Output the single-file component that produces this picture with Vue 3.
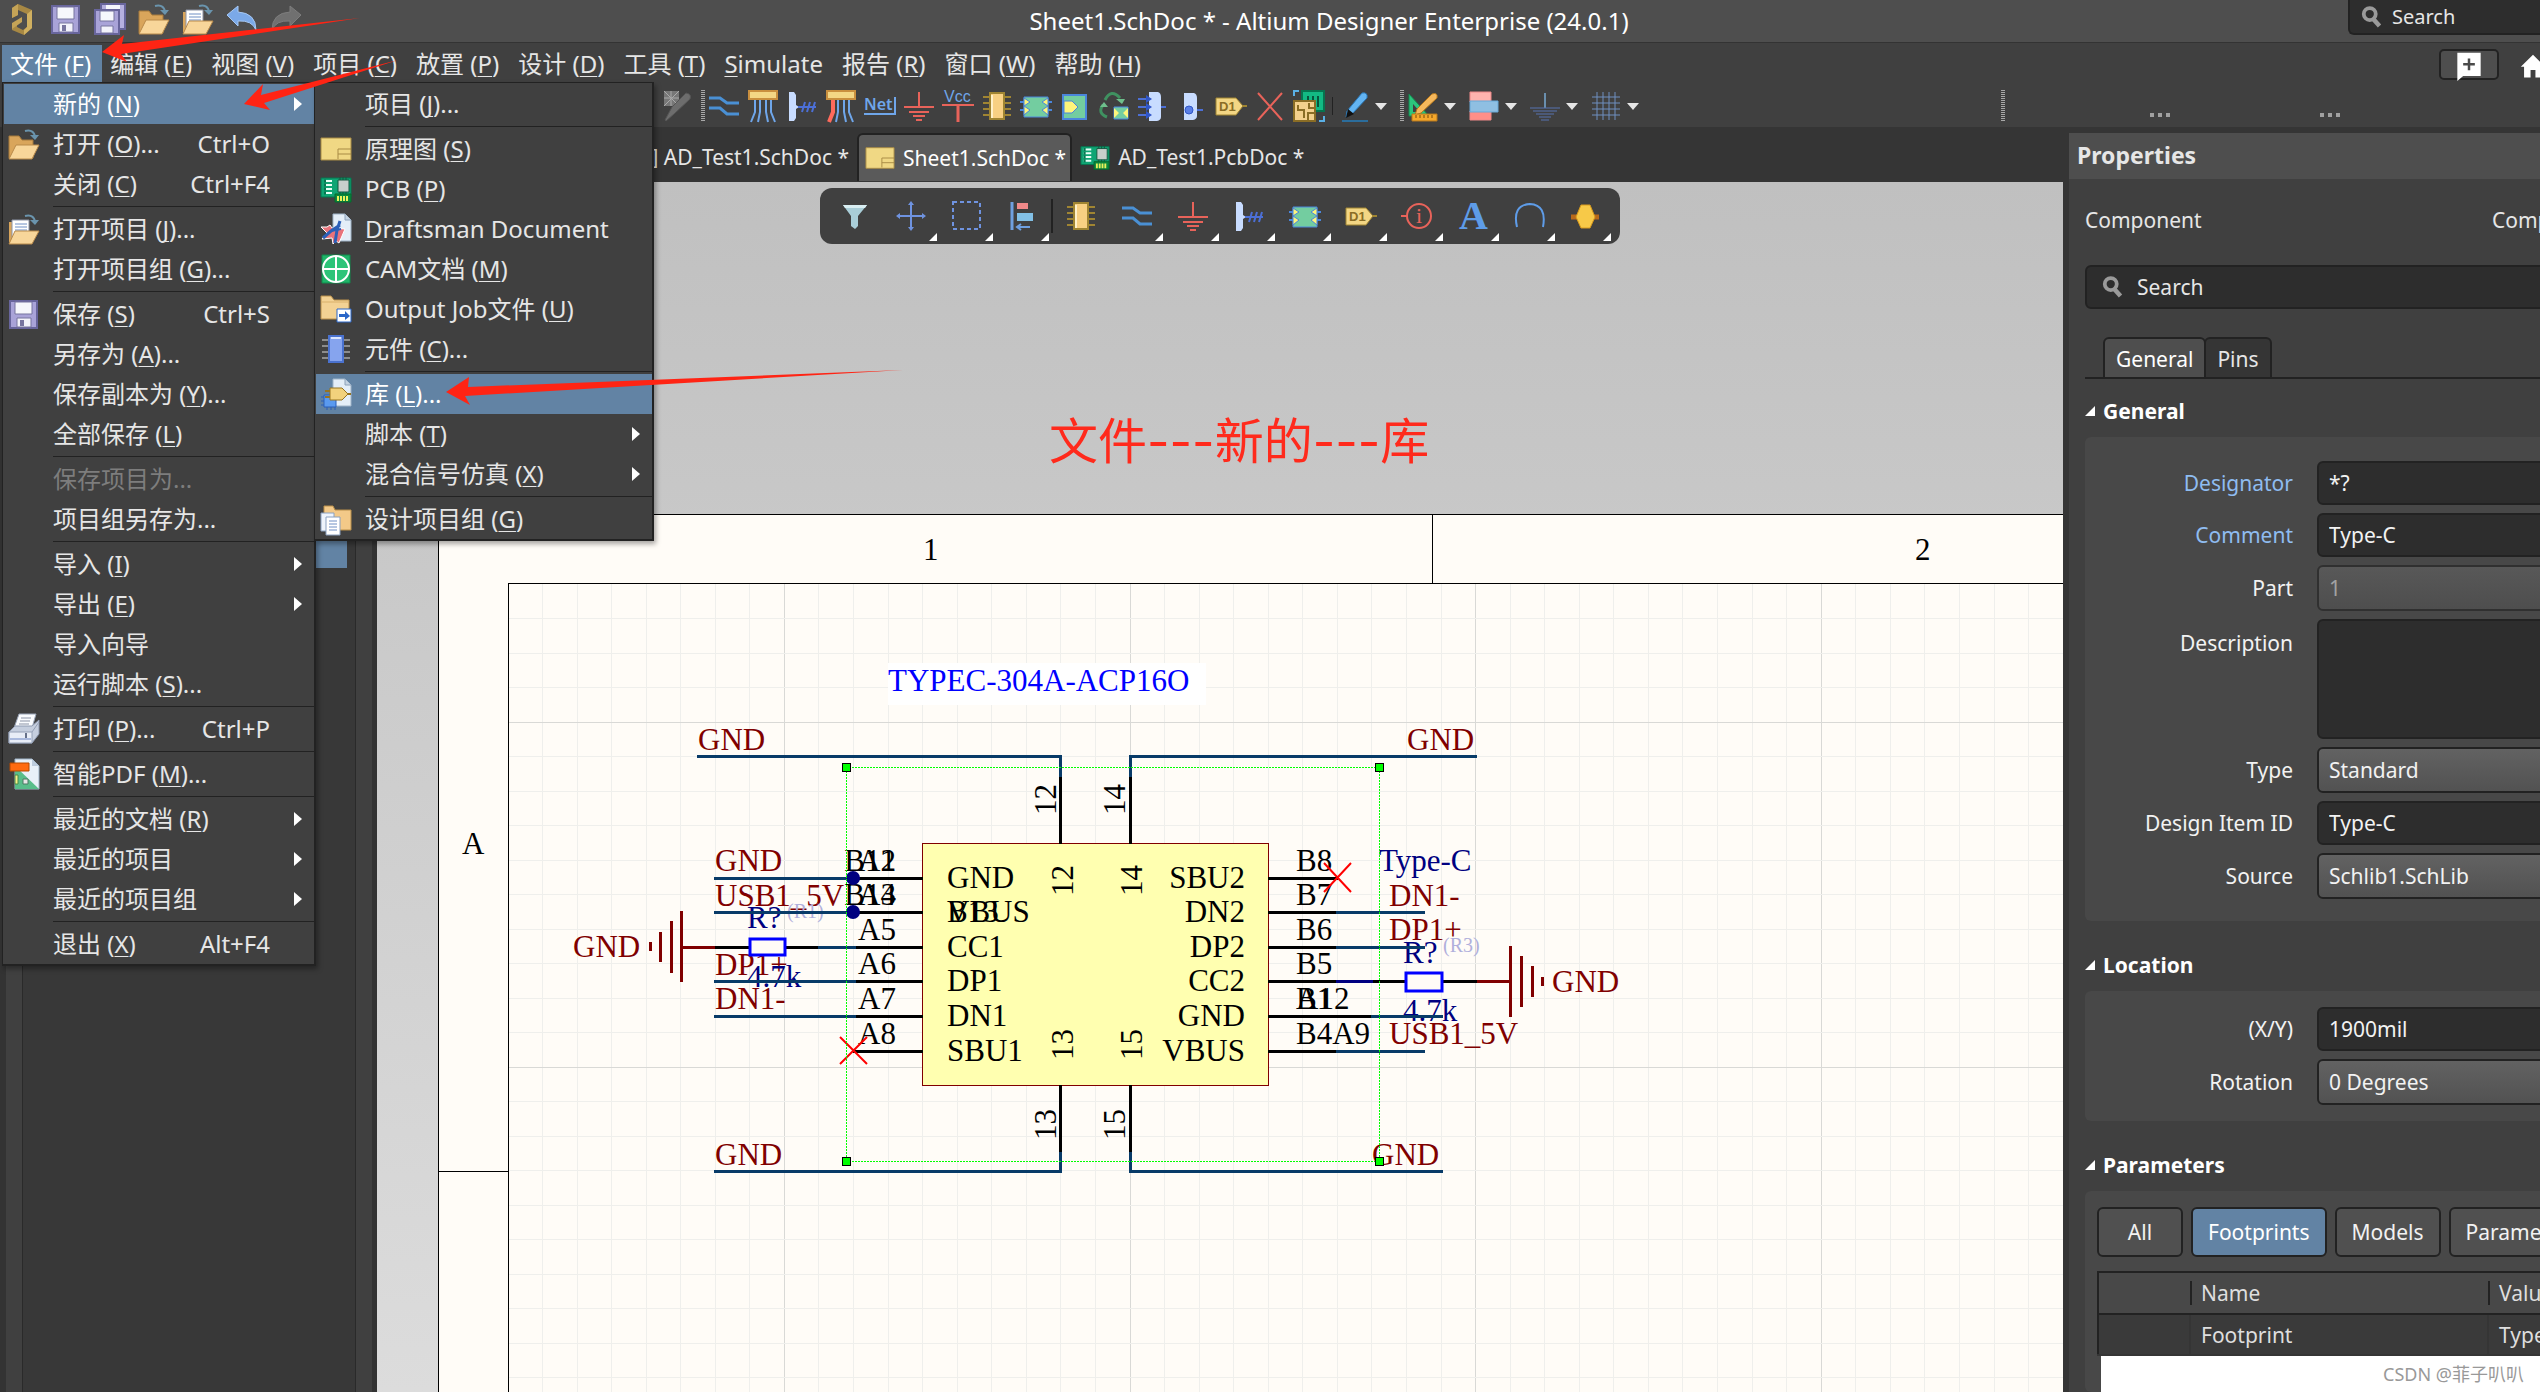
<script setup>
const quickIcons = ['logo', 'save', 'saveAll', 'folder', 'folderDocs', 'undo', 'redo']

const menuBar = [
  ['文件 (', 'F', ')'], ['编辑 (', 'E', ')'], ['视图 (', 'V', ')'], ['项目 (', 'C', ')'],
  ['放置 (', 'P', ')'], ['设计 (', 'D', ')'], ['工具 (', 'T', ')'], ['', 'S', 'imulate'],
  ['报告 (', 'R', ')'], ['窗口 (', 'W', ')'], ['帮助 (', 'H', ')']
]

const fileMenu = [
  [{ t: ['新的 (', 'N', ')'], sub: true, on: true }, { t: ['打开 (', 'O', ')...'], key: 'Ctrl+O', icon: 'folder' }, { t: ['关闭 (', 'C', ')'], key: 'Ctrl+F4' }],
  [{ t: ['打开项目 (', 'J', ')...'], icon: 'folderDocs' }, { t: ['打开项目组 (', 'G', ')...'] }],
  [{ t: ['保存 (', 'S', ')'], key: 'Ctrl+S', icon: 'save' }, { t: ['另存为 (', 'A', ')...'] }, { t: ['保存副本为 (', 'Y', ')...'] }, { t: ['全部保存 (', 'L', ')'] }],
  [{ t: ['保存项目为...', '', ''], off: true }, { t: ['项目组另存为...', '', ''] }],
  [{ t: ['导入 (', 'I', ')'], sub: true }, { t: ['导出 (', 'E', ')'], sub: true }, { t: ['导入向导', '', ''] }, { t: ['运行脚本 (', 'S', ')...'] }],
  [{ t: ['打印 (', 'P', ')...'], key: 'Ctrl+P', icon: 'printer' }],
  [{ t: ['智能PDF (', 'M', ')...'], icon: 'pdf' }],
  [{ t: ['最近的文档 (', 'R', ')'], sub: true }, { t: ['最近的项目', '', ''], sub: true }, { t: ['最近的项目组', '', ''], sub: true }],
  [{ t: ['退出 (', 'X', ')'], key: 'Alt+F4' }]
]

const newMenu = [
  [{ t: ['项目 (', 'J', ')...'] }],
  [{ t: ['原理图 (', 'S', ')'], icon: 'sheet' }, { t: ['PCB (', 'P', ')'], icon: 'pcb' }, { t: ['', 'D', 'raftsman Document'], icon: 'drafts' }, { t: ['CAM文档 (', 'M', ')'], icon: 'cam' }, { t: ['Output Job文件 (', 'U', ')'], icon: 'outjob' }, { t: ['元件 (', 'C', ')...'], icon: 'part' }],
  [{ t: ['库 (', 'L', ')...'], icon: 'library', on: true }, { t: ['脚本 (', 'T', ')'], sub: true }, { t: ['混合信号仿真 (', 'X', ')'], sub: true }],
  [{ t: ['设计项目组 (', 'G', ')'], icon: 'group' }]
]

const placeIcons = ['wires', 'bus', 'harness', 'signal', 'net', 'gnd', 'vcc', 'chip', 'block', 'entry', 'recycle', 'harnessIn', 'harnessDot', 'port', 'noErc', 'compile']
const dropIcons = ['rulers', 'alignBlock', 'gndBlue', 'gridIcon']
const floatIcons = [
  { n: 'filter' }, { n: 'move', d: 1 }, { n: 'marquee', d: 1 }, { n: 'align', d: 1 },
  { n: 'chip', sep: 1 }, { n: 'wires', d: 1 }, { n: 'gnd', d: 1 }, { n: 'harness', d: 1 }, { n: 'block', d: 1 },
  { n: 'port', d: 1 }, { n: 'info', d: 1 }, { n: 'letter', d: 1 }, { n: 'arc', d: 1 }, { n: 'hex', d: 1 }
]

const folderShape = '<path d="M1 8h10l3 4h11v18H1z" fill="#d9a55b" stroke="#a67a3c"/><path d="M8 17h23l-7 14H1z" fill="#f8d69a" stroke="#b98a4a"/>'
const folderArrow = '<path d="M17 3q8-2 10 5" fill="none" stroke="#6a94ad" stroke-width="2"/><path d="M22 7h9l-4 5z" fill="#6a94ad"/>'
const sheetDoc = '<path d="M13 1h12l6 6v21H13z" fill="#e4eef8" stroke="#9fb4c8"/><path d="M25 1v6h6" fill="#c3d2e2" stroke="#8ca2ba"/>'
const icons = {
  logo: '<path d="M6 5l6-4 14 6v18l-8 7-12-5v-4l5-3v4l6 3 4-3V11l-9-4v5l-6 3z" fill="#a78844"/><path d="M6 5l6-4v11l-6 3z" fill="#c4a357"/><path d="M6 20l10-6v5L6 26z" fill="#c4a357"/><path d="M21 11l5-4v18l-8 7v-5l3-3z" fill="#d0b060"/>',
  save: '<path d="M2 3h27v27H2z" fill="#a9a3d8" stroke="#68659c" stroke-width="2"/><path d="M7 4h17v12H7z" fill="#f6f7fc" stroke="#77749f"/><path d="M9 20h14v9H9z" fill="#f2f2fa" stroke="#77749f"/><path d="M12 22h4v6h-4z" fill="#77749f"/>',
  saveAll: '<path d="M7 1h24v25H7z" fill="#b5b0df" stroke="#68659c" stroke-width="2"/><path d="M12 2h14v6H12z" fill="#f6f7fc"/><path d="M1 7h24v24H1z" fill="#a9a3d8" stroke="#68659c" stroke-width="2"/><path d="M6 8h14v10H6z" fill="#f6f7fc" stroke="#77749f"/><path d="M7 23h12v7H7z" fill="#f2f2fa" stroke="#77749f"/>',
  folder: folderShape + folderArrow,
  folderDocs: '<path d="M1 9h6v20H1z" fill="#d9a55b"/><path d="M4 7h17v18H4z" fill="#fff" stroke="#8b93a5"/><path d="M7 11h12M7 14h12M7 17h12" stroke="#6f8fc4"/><path d="M7 18h24l-7 13H1z" fill="#f8d69a" stroke="#b98a4a"/>' + folderArrow,
  undo: '<path d="M1 12L12 3v6q18 1 18 18-4-10-18-9v5z" fill="#7ba9e8" stroke="#a6c8f4"/>',
  redo: '<path d="M31 12L20 3v6Q2 10 2 27q4-10 18-9v5z" fill="#707070" stroke="#7d7d7d"/>',
  printer: '<path d="M11 1h17l-4 14H6z" fill="#fafcff" stroke="#9aa5b8"/><path d="M13 5h10M12 8h10M11 11h10" stroke="#8b93a5"/><path d="M1 19l6-6h17l7-6v14l-7 9H1z" fill="#c5cede" stroke="#8e9ab0"/><path d="M1 19h23v11H1z" fill="#e8edf7" stroke="#94a0b6"/><path d="M24 19l7-10" stroke="#94a0b6"/><path d="M2 26h21" stroke="#6d86c4"/><path d="M18 20v5" stroke="#66718a" stroke-width="2"/>',
  pdf: '<path d="M7 1h17l7 7v23H7z" fill="#e8f0f8" stroke="#9fb4c8"/><path d="M7 8l24 23H7z" fill="#58bd8a"/><path d="M24 1v7h7" fill="#bccbdc"/><path d="M2 5h19v8H2z" fill="#ff6a10" stroke="#b54800"/><path d="M7 17h3v9H7z" fill="#f7f08a" stroke="#4b8a45"/><path d="M15 21h5v5h-5z" fill="#e6e6e6" stroke="#4b7a65"/>',
  sheet: '<path d="M1 5h30v22H1z" fill="#f0d884" stroke="#a88b45"/><path d="M18 26v-10h13M18 21h13" fill="none" stroke="#a88b45"/>',
  pcb: '<path d="M1 5h30v19H1z" fill="#0fa574" stroke="#07744f"/><path d="M4 8h8M4 12h8M4 16h8M4 20h8" stroke="#e6fff6" stroke-width="2"/><path d="M4 8h2M4 12h2M4 16h2M4 20h2" stroke="#07744f" stroke-width="3"/><path d="M18 7h11v12H18z" fill="#c8cfcb" stroke="#14563e"/><path d="M20 4v3M23 4v3M26 4v3M20 19v3M23 19v3M26 19v3" stroke="#14563e"/><path d="M15 21h16v8H15z" fill="#0a8a3f" stroke="#056a2d"/><path d="M18 23v5M21 23v5M24 23v5M27 23v5" stroke="#e9f25c" stroke-width="2"/>',
  drafts: sheetDoc + '<path d="M1 14h6l3-2 2 3 13 1-6 14-3-2-3 3-1-6-10 1 5-6z" fill="#e8737b" stroke="#fff"/><path d="M20 8l-3 9-2 13M3 25l8-7 9-6" fill="none" stroke="#2b5fb8" stroke-width="3"/><path d="M11 18l10-2" stroke="#2b5fb8" stroke-width="2"/>',
  cam: '<path d="M2 2h28v28H2z" fill="#1fb468" stroke="#118a4c"/><circle cx="16" cy="16" r="13" fill="#2cc478" stroke="#fff" stroke-width="2"/><path d="M16 3v26M3 16h26" stroke="#fff" stroke-width="2"/>',
  outjob: '<path d="M1 3h10l3 4h15v19H1z" fill="#f3d294" stroke="#b98f4a"/><path d="M2 9h26" stroke="#d9b06a"/><path d="M17 16h14v13H17z" fill="#fff" stroke="#2a66c8"/><path d="M19 21h6v-3l5 5-5 4v-3h-6z" fill="#2a66c8"/>',
  part: '<path d="M2 7h28M2 13h28M2 19h28M2 25h28" stroke="#8c8c8c" stroke-width="2"/><path d="M9 3h14v26H9z" fill="#86a4ee" stroke="#4a72cf" stroke-width="2"/><path d="M11 5h10" stroke="#dbe6ff" stroke-width="2"/>',
  library: sheetDoc + '<path d="M4 17h12v12H4z" fill="#5a9af0" stroke="#2a5fb8"/><path d="M1 19h3M1 23h3M1 27h3M7 29v3M11 29v3M15 29v3" stroke="#2a5fb8"/><path d="M10 10h12l6 6-6 6H10z" fill="#f2d27c" stroke="#977421"/><path d="M5 13h5M5 19h5M28 16h3" stroke="#977421" stroke-width="2"/>',
  group: '<path d="M4 3h9l2 4h16v20H4z" fill="#f3c988" stroke="#b98f4a"/><path d="M1 10h13v18H1z" fill="#eef4fc" stroke="#8aa0bf"/><path d="M6 14h14v18H6z" fill="#fff" stroke="#8aa0bf"/><path d="M9 18h8M9 21h8M9 24h8M9 27h8" stroke="#6f8fc4"/>',
  wand: '<path d="M3 1h15v15H3z" fill="#777"/><path d="M3 1l15 15M18 1L3 16M10 1v15M3 8h15" stroke="#a9a9a9"/><path d="M25 3q6 1 4 6L13 24l-8 7-1-1 7-13z" fill="#6d6d6d" stroke="#555"/>',
  wires: '<path d="M1 8h11l7 5h12M1 18h11l7 6h12" fill="none" stroke="#4a90d4" stroke-width="3"/>',
  bus: '<path d="M8 10v12l-4 10M13 10v12l-2 10M19 10v12l2 10M24 10v12l4 10" fill="none" stroke="#6fa6ea" stroke-width="2"/><path d="M2 1h28v8H2z" fill="#f3d684" stroke="#c98f3e" stroke-width="2"/>',
  harness: '<path d="M3 2h5l2 3v10l3 2-3 2v9l-2 3H3z" fill="#c8dcff"/><path d="M12 17h18M19 12l-3 10M24 12l-3 10M29 12l-3 10" stroke="#4c6fd6" stroke-width="2"/>',
  signal: '<path d="M13 10v12l-2 10M19 10v12l2 10M24 10v12l4 10" fill="none" stroke="#6fa6ea" stroke-width="2"/><path d="M8 10v12l-4 10" fill="none" stroke="#ff6a5c" stroke-width="4"/><path d="M2 1h28v8H2z" fill="#f3d684" stroke="#c98f3e" stroke-width="2"/>',
  net: '<text x="0" y="20" font-family="Noto Sans" font-weight="600" font-size="16" fill="#6fa6ea">Net</text><path d="M0 24h31V7" fill="none" stroke="#6fa6ea" stroke-width="2"/>',
  gnd: '<path d="M16 2v15" stroke="#e8635a" stroke-width="2"/><path d="M1 17h30M6 22h20M10 26h12M13 30h6" stroke="#e8635a" stroke-width="2"/>',
  vcc: '<text x="2" y="12" font-family="Liberation Sans" font-size="16" fill="#6fa6ea">Vcc</text><path d="M0 15h32" stroke="#e8635a" stroke-width="2"/><path d="M16 15v17" stroke="#e8635a" stroke-width="3"/>',
  chip: '<path d="M2 7h28M2 13h28M2 19h28M2 25h28" stroke="#a08532" stroke-width="2"/><path d="M9 3h14v26H9z" fill="#f8d082" stroke="#a08532" stroke-width="2"/><path d="M11 5v23" stroke="#fff0c8" stroke-width="2"/>',
  block: '<path d="M0 12h32M0 20h32" stroke="#4a86dc" stroke-width="2"/><path d="M4 7h24v20H4z" fill="#73cda0" stroke="#4a86dc"/><path d="M4 8l6 4-6 4 6 4-6 5zM28 8l-6 4 6 4-6 4 6 5z" fill="#fdf57c" stroke="#4a86dc"/>',
  entry: '<path d="M4 5h23v24H4z" fill="#73cda0" stroke="#4a86dc" stroke-width="2"/><path d="M5 11h8l6 6-6 6H5z" fill="#fdf57c" stroke="#4a86dc"/>',
  recycle: '<path d="M7 10q6-12 15-2M5 15q-6 8 4 12" fill="none" stroke="#3f9160" stroke-width="3"/><path d="M18 9h9l-3 5zM2 17l4-5 4 5z" fill="#6fbf8c"/><path d="M16 17h14v12H16z" fill="#73cda0" stroke="#4a86dc"/><path d="M16 18l5 5-5 5zM30 18l-5 5 5 5z" fill="#fdf57c"/>',
  harnessIn: '<path d="M12 2h9q3 1 3 5v20q0 3-4 4h-8z" fill="#c8dcff"/><path d="M1 9h10M1 17h10M1 25h10M24 17h5" stroke="#4c6fd6" stroke-width="2"/><path d="M9 5l6 4-6 4zM9 13l6 4-6 4zM9 21l6 4-6 4z" fill="#2f56c8"/>',
  harnessDot: '<path d="M8 3h10q3 1 3 5v18q0 3-4 4H8z" fill="#c8dcff"/><circle cx="13" cy="20" r="4" fill="#5a7fe6" stroke="#2f56c8"/><path d="M21 20h6" stroke="#4c6fd6" stroke-width="2"/>',
  port: '<path d="M1 8h20l7 8-7 9H1z" fill="#f3d684" stroke="#a08532"/><path d="M28 16h4" stroke="#a08532" stroke-width="2"/><text x="4" y="21" font-family="Liberation Sans" font-weight="700" font-size="13" fill="#8a6d25">D1</text>',
  noErc: '<path d="M4 3l24 27M28 3L4 30" stroke="#e8635a" stroke-width="2"/>',
  compile: '<path d="M9 1h22v20H9z" fill="#12b983" stroke="#07744f" stroke-width="2"/><path d="M15 6v6M20 6v6M25 6v11" stroke="#06563c" stroke-width="2"/><path d="M1 11h21v20H1z" fill="#f3d08c" stroke="#8a6d25" stroke-width="2"/><path d="M5 15v5h6v8M16 13v5h5M15 30v-7h6" fill="none" stroke="#8a6d25" stroke-width="2"/><path d="M1 6V1h5M31 26v5h-5" fill="none" stroke="#5ab0e6" stroke-width="2"/>',
  pen: '<path d="M24 3q6-1 5 5L14 24l-6 3 1-6z" fill="#63b4f2" stroke="#2a78b8"/><path d="M10 19l6 5-8 4z" fill="#111"/><path d="M4 31h26" stroke="#2b6d9c" stroke-width="2"/>',
  rulers: '<path d="M2 4l20 22H2z" fill="#2bc67c" stroke="#15874f"/><path d="M6 14l7 8H6z" fill="#404040"/><path d="M25 4q6-2 5 4L14 23l-6 2 2-6z" fill="#f5b85c" stroke="#b5771c"/><path d="M5 24h25v7H5z" fill="#f5a82c" stroke="#b5771c"/><path d="M9 25v3M13 25v3M17 25v3M21 25v3M25 25v3" stroke="#7a4d0a"/>',
  alignBlock: '<path d="M2 2h21v10H2z" fill="#ffb3ae" stroke="#e88"/><path d="M2 21h21v9H2z" fill="#ff8f88" stroke="#e88"/><path d="M2 11h28v11H2z" fill="#8fbfe2" stroke="#69a9d8"/>',
  gndBlue: '<path d="M16 3v15" stroke="#6a8fae" stroke-width="2"/><path d="M1 18h30M4 21h24M7 24h18M10 27h12M12 30h8" stroke="#5673b0" stroke-width="1"/>',
  gridIcon: '<path d="M7 2v28M13 2v28M19 2v28M25 2v28M2 7h28M2 13h28M2 19h28M2 25h28" stroke="#6f8fc0"/>',
  filter: '<path d="M4 5h24l-9 11v10l-3 3-4-3V16z" fill="#a9ced8"/><path d="M4 5h24l-2 3H6z" fill="#d9eef2"/>',
  move: '<path d="M16 3v26M3 16h26" stroke="#6f93e0" stroke-width="2"/><path d="M13 5l3-4 3 4zM13 27l3 4 3-4zM5 13l-4 3 4 3zM27 13l4 3-4 3z" fill="#6f93e0"/>',
  marquee: '<path d="M2 2h27v27H2z" fill="none" stroke="#6f93e0" stroke-width="2" stroke-dasharray="4 3"/>',
  align: '<path d="M5 2v28" stroke="#6fa0e0" stroke-width="3"/><path d="M10 3h11v6H10z" fill="#f08a8a"/><path d="M10 13h16v8H10z" fill="#82c0e6"/><path d="M10 27h13M14 24l-4 3 4 3" fill="none" stroke="#6fa0e0" stroke-width="2"/>',
  info: '<circle cx="18" cy="16" r="12" fill="none" stroke="#e8635a" stroke-width="2"/><path d="M0 16h6" stroke="#e8635a" stroke-width="2"/><text x="15" y="23" font-family="Liberation Serif" font-size="22" fill="#e8635a">i</text>',
  letter: '<text x="2" y="29" font-family="Liberation Serif" font-weight="700" font-size="40" fill="#5e9ce8">A</text>',
  arc: '<path d="M4 27Q-1 5 17 4q17 1 13 23" fill="none" stroke="#5e9ce8" stroke-width="2"/>',
  hex: '<path d="M2 17h28" stroke="#b8691a" stroke-width="5"/><path d="M12 5h9l5 12-5 11h-9L7 17z" fill="#f7c948" stroke="#d89a1c"/>',
  find: '<circle cx="13" cy="12" r="8" fill="none" stroke="#9a9a9a" stroke-width="5"/><path d="M18 19l8 9" stroke="#9a9a9a" stroke-width="6"/>',
  comment: '<path d="M3 2h28v28H10l-7 6z" fill="#fff"/><path d="M17 9v14M10 16h14" stroke="#4a4a4a" stroke-width="3"/>',
  home: '<path d="M16 2l15 15h-4v13h-8v-9h-6v9H5V17H1z" fill="#fff"/>'
}

/* schematic data, in sheet coordinates */
const gridX = Array.from({ length: 45 }, (_, i) => ({ p: Math.round(542 + i * 34.56), major: i % 10 === 7 }))
const gridY = Array.from({ length: 24 }, (_, i) => ({ p: Math.round(619 + i * 34.5) - 1, major: i % 10 === 3 }))
const rows = [878, 912, 947, 981, 1016, 1051]
const leftNames = ['GND', 'VBUS', 'CC1', 'DP1', 'DN1', 'SBU1']
const rightNames = ['SBU2', 'DN2', 'DP2', 'CC2', 'GND', 'VBUS']
const leftPins = [['B12', 'A1'], ['B13', 'A4'], ['A5'], ['A6'], ['A7'], ['A8']]
const rightPins = [['B8'], ['B7'], ['B6'], ['B5'], ['B1', 'A12'], ['B4A9']]
const wires = [
  'M697 756H1060V777', 'M1477 756H1130V777', 'M714 1171H1060V1152', 'M1443 1171H1130V1152',
  'M714 878H853', 'M714 912H853', 'M818 947H856', 'M714 981H856', 'M714 1016H856',
  'M1336 912H1425', 'M1336 947H1425', 'M1371 1016H1443', 'M1336 1051H1425'
]
const pins = [
  'M1060 777V844', 'M1130 777V844', 'M1060 1085V1152', 'M1130 1085V1152',
  'M853 878H923', 'M853 912H923', 'M856 947H923', 'M856 981H923', 'M856 1016H923', 'M853 1051H923',
  'M1268 878H1338', 'M1268 912H1336', 'M1268 947H1336', 'M1268 981H1336', 'M1268 1016H1371', 'M1268 1051H1336',
  'M715 947H750', 'M785 947H818', 'M1373 981H1406', 'M1442 981H1477'
]
const nets = [
  ['GND', 698, 750], ['GND', 1407, 750], ['GND', 715, 871], ['USB1_5V', 715, 906], ['DP1+', 715, 975],
  ['DN1-', 715, 1009], ['GND', 715, 1165], ['GND', 1372, 1165], ['DN1-', 1389, 906], ['DP1+', 1389, 940],
  ['USB1_5V', 1389, 1044], ['GND', 573, 957], ['GND', 1552, 992]
]
const vertical = [
  ['12', 1056, 815], ['14', 1125, 815], ['12', 1073, 896], ['14', 1142, 896],
  ['13', 1073, 1060], ['15', 1142, 1060], ['13', 1056, 1140], ['15', 1125, 1140]
]
const handles = [[846, 767], [1379, 767], [846, 1161], [1379, 1161]]
</script>

<template>
  <div class="app">
    <header class="titlebar">
      <div class="quick">
        <button v-for="n in quickIcons" :key="n" class="quick-btn" :aria-label="n">
          <svg viewBox="0 0 32 32" v-html="icons[n]"></svg>
        </button>
      </div>
      <h1>Sheet1.SchDoc * - Altium Designer Enterprise (24.0.1)</h1>
      <div class="global-search">
        <svg viewBox="0 0 32 32" v-html="icons.find"></svg>
        <input type="text" placeholder="Search" aria-label="Search">
      </div>
    </header>

    <nav class="menubar">
      <button v-for="(m, i) in menuBar" :key="i" class="menu-btn" :class="{ open: i === 0 }">{{ m[0] }}<u>{{ m[1] }}</u>{{ m[2] }}</button>
      <div class="menubar-right">
        <button class="comment-btn" aria-label="Comment"><svg viewBox="0 0 34 36" v-html="icons.comment"></svg></button>
        <button class="home-btn" aria-label="Home"><svg viewBox="0 0 32 32" v-html="icons.home"></svg></button>
      </div>

      <div class="menu file-menu">
        <div v-for="(g, gi) in fileMenu" :key="gi" class="group">
          <button v-for="(it, k) in g" :key="k" class="item" :class="{ on: it.on }" :disabled="it.off">
            <span class="ico"><svg v-if="it.icon" viewBox="0 0 32 32" v-html="icons[it.icon]"></svg></span>
            <span class="label">{{ it.t[0] }}<u v-if="it.t[1]">{{ it.t[1] }}</u>{{ it.t[2] }}</span>
            <span v-if="it.key" class="key">{{ it.key }}</span>
            <span v-if="it.sub" class="caret"></span>
          </button>
        </div>
        <div class="menu new-menu">
          <div v-for="(g, gi) in newMenu" :key="gi" class="group">
            <button v-for="(it, k) in g" :key="k" class="item" :class="{ on: it.on }">
              <span class="ico"><svg v-if="it.icon" viewBox="0 0 32 32" v-html="icons[it.icon]"></svg></span>
              <span class="label">{{ it.t[0] }}<u>{{ it.t[1] }}</u>{{ it.t[2] }}</span>
              <span v-if="it.sub" class="caret"></span>
            </button>
          </div>
        </div>
      </div>
    </nav>

    <div class="toolbar">
      <button class="tool" aria-label="wand"><svg viewBox="0 0 32 32" v-html="icons.wand"></svg></button>
      <span class="grip"></span>
      <button v-for="n in placeIcons" :key="n" class="tool" :aria-label="n"><svg viewBox="0 0 32 32" v-html="icons[n]"></svg></button>
      <span class="tool-sep"></span>
      <button class="tool drop" aria-label="pen"><svg viewBox="0 0 32 32" v-html="icons.pen"></svg></button>
      <span class="grip"></span>
      <button v-for="n in dropIcons" :key="n" class="tool drop" :aria-label="n"><svg viewBox="0 0 32 32" v-html="icons[n]"></svg></button>
      <div class="toolbar-end">
        <span class="grip"></span>
        <span class="dots"><i></i><i></i><i></i></span>
        <span class="dots"><i></i><i></i><i></i></span>
      </div>
    </div>

    <main class="work">
      <aside class="side">
        <div class="side-body"><div class="tree-row"></div></div>
      </aside>

      <section class="docs">
        <div class="tabs">
          <button class="tab first">[1] AD_Test1.SchDoc *</button>
          <button class="tab active"><svg viewBox="0 0 32 32" v-html="icons.sheet"></svg>Sheet1.SchDoc *</button>
          <button class="tab"><svg viewBox="0 0 32 32" v-html="icons.pcb"></svg>AD_Test1.PcbDoc *</button>
        </div>
        <div class="canvas">
          <svg class="schematic" viewBox="377 182 1686 1210" preserveAspectRatio="xMinYMin slice">
            <rect x="438" y="514" width="3000" height="2000" fill="#fffcf7" stroke="#000" stroke-width="1" shape-rendering="crispEdges" />
            <g shape-rendering="crispEdges" stroke-width="1">
              <path v-for="g in gridX" :key="'x' + g.p" :d="`M${g.p} 583V1500`" :stroke="g.major ? '#d9d9d6' : '#efefec'" />
              <path v-for="g in gridY" :key="'y' + g.p" :d="`M508 ${g.p}H2100`" :stroke="g.major ? '#d9d9d6' : '#efefec'" />
            </g>
            <path d="M2100 583H508V1400M1432 514V583M438 1171H508" fill="none" stroke="#000" stroke-width="1" shape-rendering="crispEdges" />
            <g class="sch" fill="#000">
              <text x="923" y="560">1</text>
              <text x="1915" y="560">2</text>
              <text x="462" y="854">A</text>
            </g>
            <rect x="888" y="663" width="318" height="42" fill="#fff" />
            <text class="sch" x="888" y="691" fill="#00f">TYPEC-304A-ACP16O</text>

            <rect x="922" y="843" width="346" height="242" fill="#ffffb0" stroke="#800000" shape-rendering="crispEdges" />
            <g class="sch" fill="#800000">
              <text v-for="(n, i) in nets" :key="i" :x="n[1]" :y="n[2]">{{ n[0] }}</text>
            </g>
            <g class="sch" fill="#000080">
              <text x="1379" y="871">Type-C</text>
              <text x="747" y="928">R?</text>
              <text x="747" y="987">4.7k</text>
              <text x="1403" y="963">R?</text>
              <text x="1403" y="1021">4.7k</text>
            </g>
            <text class="sch small" x="787" y="918">(R1)</text>
            <text class="sch small" x="1443" y="952">(R3)</text>
            <g fill="none" shape-rendering="crispEdges">
              <path v-for="w in wires" :key="w" :d="w" stroke="#083b68" stroke-width="3" />
              <path v-for="p in pins" :key="p" :d="p" stroke="#000" stroke-width="3" />
              <path d="M1336 981H1373" stroke="#000080" stroke-width="3" />
              <path d="M681 947H715M1477 981H1510" stroke="#800000" stroke-width="3" />
              <path d="M650 942V951M660 932V962M671 921V973M681 911V982M1542 977V986M1532 966V997M1521 956V1007M1510 946V1017" stroke="#800000" stroke-width="3" />
            </g>
            <rect x="750" y="939" width="35" height="16" fill="#fffcf7" stroke="#00f" stroke-width="3" />
            <rect x="1406" y="973" width="36" height="18" fill="#fffcf7" stroke="#00f" stroke-width="3" />
            <g class="sch" fill="#000">
              <template v-for="(y, i) in rows" :key="y">
                <text x="947" :y="y + 10">{{ leftNames[i] }}</text>
                <text x="1245" :y="y + 10" text-anchor="end">{{ rightNames[i] }}</text>
                <text v-for="p in leftPins[i]" :key="p" x="896" :y="y - 7" text-anchor="end">{{ p }}</text>
                <text v-for="p in rightPins[i]" :key="p" x="1296" :y="y - 7">{{ p }}</text>
              </template>
              <text x="947" y="922">B13</text>
              <text v-for="(v, i) in vertical" :key="i" :transform="`translate(${v[1]} ${v[2]}) rotate(-90)`">{{ v[0] }}</text>
            </g>
            <circle cx="853" cy="878" r="7" fill="#000080" />
            <circle cx="853" cy="912" r="7" fill="#000080" />
            <path d="M840 1037L867 1064M867 1037L840 1064M1324 863L1351 892M1351 863L1324 892" stroke="#f00" stroke-width="2" />
            <rect x="846" y="767" width="533" height="394" fill="none" stroke="#0f0" stroke-dasharray="2 1" shape-rendering="crispEdges" />
            <rect v-for="h in handles" :key="h.join()" :x="h[0] - 4" :y="h[1] - 4" width="8" height="8" fill="#0f0" stroke="#000" shape-rendering="crispEdges" />
            <text class="note" x="1049" y="459">文件<tspan class="dash">---</tspan>新的<tspan class="dash">---</tspan>库</text>
          </svg>
          <div class="floatbar">
            <button v-for="f in floatIcons" :key="f.n" class="float-btn" :class="{ more: f.d, sep: f.sep }" :aria-label="f.n"><svg viewBox="0 0 32 32" v-html="icons[f.n]"></svg></button>
          </div>
        </div>
      </section>

      <aside class="props">
        <h2 class="props-title">Properties</h2>
        <div class="props-body">
          <div class="kind"><span>Component</span><span>Components (and 11 more)</span></div>
          <div class="search">
            <svg viewBox="0 0 32 32" v-html="icons.find"></svg>
            <input type="text" placeholder="Search" aria-label="Search properties">
          </div>
          <div class="ptabs">
            <button class="ptab active">General</button><button class="ptab">Pins</button>
          </div>

          <h3>General</h3>
          <div class="card general">
            <label class="blue" for="designator">Designator</label><input id="designator" type="text" value="*?">
            <label class="blue" for="comment">Comment</label><input id="comment" type="text" value="Type-C">
            <label for="part">Part</label><select id="part" disabled><option>1</option></select>
            <label for="description" class="top">Description</label><textarea id="description"></textarea>
            <label for="type">Type</label><select id="type"><option>Standard</option></select>
            <label for="item">Design Item ID</label><input id="item" type="text" value="Type-C">
            <label for="source">Source</label><select id="source"><option>Schlib1.SchLib</option></select>
          </div>

          <h3>Location</h3>
          <div class="card location">
            <label for="xy">(X/Y)</label><input id="xy" type="text" value="1900mil">
            <label for="rotation">Rotation</label><select id="rotation"><option>0 Degrees</option></select>
          </div>

          <h3>Parameters</h3>
          <div class="card params">
            <div class="filters">
              <button class="all">All</button><button class="on">Footprints</button><button>Models</button><button>Parameters</button>
            </div>
            <table>
              <thead><tr><th class="c0"></th><th class="c1"><span>Name</span></th><th><span>Value</span></th></tr></thead>
              <tbody><tr><td></td><td>Footprint</td><td>Type-C</td></tr></tbody>
            </table>
            <div class="blank"></div>
          </div>
        </div>
      </aside>
    </main>

    <svg class="arrows" width="1000" height="500">
      <g fill="#ff2414">
        <path d="M102 52L124 35L122 44L360 18L121 54L127 62Z" />
        <path d="M244 104L263 84L261 95L398 60L264 103L270 110Z" />
        <path d="M446 392L469 377L468 387L903 370L465 396L470 405Z" />
      </g>
    </svg>
    <div class="watermark">CSDN @菲子叭叭</div>
  </div>
</template>

<style>
body { background: #353535; overflow: hidden; }
</style>

<style scoped>
.app {
  position: relative;
  display: flex;
  flex-direction: column;
  height: 100vh;
  overflow: hidden;
  background: #353535;
  color: #e6e6e6;
  font: 24px/32px "Noto Sans", "Noto Sans CJK SC", sans-serif;
}
.app * { box-sizing: border-box; }
button, input, select, textarea { font: inherit; color: inherit; margin: 0; padding: 0; border: 0; background: none; outline: 0; }
svg { display: block; overflow: visible; }
u { text-decoration: underline; text-decoration-thickness: 1px; text-underline-offset: 3px; text-decoration-skip-ink: none; }

.titlebar { display: flex; height: 43px; flex: none; background: #4e4e4e; border-bottom: 1px solid #333; }
.quick { display: flex; gap: 12px; padding: 3px 0 0 6px; flex: 0 0 310px; }
.quick-btn svg { width: 32px; height: 32px; }
.quick-btn { height: 32px; }
h1 { flex: 1; margin: 0; text-align: center; font-size: 24px; line-height: 42px; font-weight: 400; color: #fff; white-space: nowrap; }
.global-search { display: flex; align-items: center; flex: 0 0 192px; height: 35px; padding-left: 10px; gap: 8px; background: #2d2d2d; border: 2px solid #222; border-width: 0 0 2px 2px; border-radius: 0 0 0 6px; overflow: hidden; }
.global-search svg, .search svg { width: 24px; height: 24px; flex: none; }
.global-search input { width: 140px; font-size: 20px; }
input::placeholder { color: #e6e6e6; opacity: 1; }

.menubar { position: relative; z-index: 5; display: flex; flex: none; height: 39px; padding-left: 2px; background: #404040; }
.menu-btn { margin-top: 2px; height: 37px; padding: 0 11px 0 8px; white-space: nowrap; }
.menu-btn.open { background: #6283a4; color: #fff; }
.menubar-right { display: flex; margin-left: auto; flex: 0 0 101px; padding-top: 6px; overflow: hidden; }
.comment-btn { display: flex; justify-content: center; flex: 0 0 60px; height: 31px; background: #4e4e4e; border: 2px solid #222; border-radius: 5px; }
.comment-btn svg { width: 36px; height: 30px; }
.home-btn { flex: none; margin-left: 11px; padding: 3px 0 0 9px; height: 31px; }
.home-btn svg { width: 28px; height: 26px; }

.menu { position: absolute; background: #404040; border: 2px solid #222; box-shadow: 2px 3px 5px rgba(0, 0, 0, .35); }
.file-menu { left: 2px; top: 39px; width: 314px; border-width: 1px 2px 2px 1px; padding: 1px 0 0 1px; }
.new-menu { left: 311px; top: -1px; width: 340px; border-width: 1px 2px 2px 1px; padding: 1px 0 0 1px; }
.group + .group { position: relative; padding-top: 5px; }
.group + .group::before { content: ""; position: absolute; left: 49px; right: 0; top: 2px; height: 1px; background: #222; }
.item { display: flex; align-items: center; width: 100%; height: 40px; padding-left: 4px; text-align: left; white-space: nowrap; }
.item.on { background: #6283a4; color: #fff; }
.item:disabled { color: #7d7d7d; }
.ico { flex: 0 0 45px; }
.ico svg { width: 32px; height: 32px; }
.label { flex: 1; }
.key { margin-right: 44px; }
.caret { margin-right: 12px; border: 7px solid transparent; border-left: 8px solid #fff; border-right: 0; }

.toolbar { display: flex; align-items: center; flex: none; height: 45px; padding: 3px 0 0 658px; background: #404040; }
.tool { flex: 0 0 39px; padding-left: 3px; height: 32px; }
.tool svg { width: 32px; height: 32px; }
.grip { flex: 0 0 4px; height: 32px; margin-left: 4px; background: repeating-linear-gradient(#a8a8a8 0 1px, #404040 1px 2px); }
.tool-sep { flex: 0 0 1px; height: 18px; margin: 0 2px 0 3px; background: #222; }
.drop { position: relative; flex: 0 0 61px; }
.drop::after { content: ""; position: absolute; left: 40px; top: 13px; border: 6px solid transparent; border-top: 7px solid #e6e6e6; border-bottom: 0; }
.toolbar-end { display: flex; align-items: center; margin-left: auto; flex: 0 0 543px; }
.dots { display: flex; gap: 4px; margin-left: 145px; padding-top: 18px; }
.dots + .dots { margin-left: 150px; }
.dots i { width: 4px; height: 4px; background: #a0a0a0; }

.work { display: flex; flex: 1; min-height: 0; }
.side { display: flex; flex: 0 0 377px; background: #404040; border-left: 6px solid #333; border-right: 5px solid #333; padding: 0 16px; }
.side-body { flex: 1; background: #383838; border: 1px solid #2a2a2a; border-width: 0 1px; padding: 401px 8px 0 0; }
.tree-row { height: 40px; background: #6283a4; }

.docs { display: flex; flex-direction: column; flex: 1; min-width: 0; }
.tabs { display: flex; align-items: flex-end; flex: none; height: 55px; padding-bottom: 1px; font-size: 21px; }
.tab { display: flex; align-items: center; gap: 8px; height: 48px; padding: 0 8px; white-space: nowrap; }
.tab svg { width: 30px; height: 30px; }
.tab.first { flex: 0 0 480px; justify-content: flex-end; }
.tab.active { padding: 0 4px 0 6px; background: #5a5a5a; border: 2px solid #222; border-bottom: 0; border-radius: 6px 6px 0 0; color: #fff; }
.canvas { position: relative; flex: 1; min-height: 0; overflow: hidden; background: linear-gradient(#c0c0c0, #dcdcdc); }
.schematic { position: absolute; inset: 0; width: 100%; height: 100%; overflow: hidden; }
.sch { font-family: "Liberation Serif", serif; font-size: 31px; }
.small { font-size: 20px; fill: #b0b0dc; }
.note { font-size: 49px; fill: #ff2a1c; font-family: "Noto Sans", "Noto Sans CJK SC", sans-serif; }
.dash { font-family: "Inter", sans-serif; }

.floatbar { position: absolute; top: 6px; left: 50%; transform: translateX(-50%); display: flex; padding: 0 7px; height: 56px; background: #404040; border-radius: 12px; }
.float-btn { position: relative; width: 56px; display: flex; align-items: center; justify-content: center; }
.float-btn svg { width: 32px; height: 32px; }
.float-btn.more::after { content: ""; position: absolute; right: 2px; bottom: 3px; border-left: 8px solid transparent; border-bottom: 8px solid #fff; }
.float-btn.sep { width: 58px; border-left: 2px solid #222; border-image: linear-gradient(transparent 12px, #222 12px, #222 44px, transparent 44px) 1; }

.props { display: flex; flex-direction: column; flex: 0 0 471px; margin: 6px 0 0 6px; background: #404040; overflow: hidden; font-size: 21px; }
.props-title { flex: none; margin: 0; padding-left: 8px; height: 46px; line-height: 44px; font-size: 23px; font-weight: 700; background: #4e4e4e; }
.props-body { display: flex; flex-direction: column; flex: 1; min-height: 0; width: 620px; padding-left: 16px; }
.kind { display: flex; height: 86px; padding-top: 25px; white-space: nowrap; }
.kind span:first-child { flex: 0 0 407px; }
.search { display: flex; align-items: center; flex: none; gap: 12px; height: 44px; padding-left: 14px; background: #2d2d2d; border: 2px solid #222; border-radius: 6px; }
.ptabs { display: flex; flex: none; height: 42px; margin-top: 28px; padding-left: 18px; border-bottom: 2px solid #222; }
.ptab { height: 42px; padding: 2px 11px 0; margin-right: -2px; background: #353535; border: 2px solid #222; border-radius: 6px 6px 0 0; }
.ptab.active { background: #4e4e4e; color: #fff; }
h3 { position: relative; flex: none; margin: 0; padding-left: 18px; font-size: 21px; line-height: 32px; font-weight: 700; color: #fff; }
h3::before { content: ""; position: absolute; left: 0; top: 11px; border-left: 10px solid transparent; border-bottom: 10px solid #fff; }
.ptabs + h3 { margin-top: 16px; }
.card { flex: none; background: #484848; border-radius: 6px; color: #f2f2f2; }
.general, .location { display: grid; grid-template-columns: 208px 1fr; column-gap: 24px; row-gap: 8px; align-items: center; margin: 10px 0 28px; padding: 24px 12px 22px 0; }
.location { padding: 16px 12px 16px 0; }
.card label { text-align: right; }
.card label.blue { color: #8fbcf0; }
.card label.top { align-self: start; padding-top: 8px; }
.card input, .card textarea, .card select { display: block; width: 100%; height: 44px; padding: 0 10px; background: #2d2d2d; border: 2px solid #222; border-radius: 6px; }
.card textarea { height: 120px; resize: none; }
.card select { appearance: none; height: 46px; background: linear-gradient(#626262, #525252); opacity: 1; }
.card select:disabled { color: #a2a2a2; background: linear-gradient(#585858, #4e4e4e); border-color: #303030; }
.params { flex: 1; display: flex; flex-direction: column; min-height: 0; margin-top: 10px; padding: 16px 0 0 12px; }
.filters { display: flex; flex: none; gap: 8px; margin-bottom: 14px; }
.filters button { height: 50px; padding: 0 15px; background: #505050; border: 2px solid #222; border-radius: 6px; }
.filters .all { width: 86px; }
.filters .on { background: #6283a4; color: #fff; }
table { border-collapse: collapse; table-layout: fixed; width: 600px; flex: none; }
th, td { padding: 0 10px; font-weight: 400; text-align: left; color: #dedede; }
th { height: 42px; padding: 0; border-top: 2px solid #222; border-bottom: 2px solid #222; background: #484848; }
th span { display: block; height: 24px; line-height: 24px; padding-left: 9px; border-left: 2px solid #222; }
td { height: 41px; background: #3a3a3a; border: 2px solid #353535; }
th:first-child, td:first-child { border-left: 2px solid #222; }
.c0 { width: 92px; }
.c1 { width: 298px; }
.blank { flex: 1; margin-left: 4px; background: #fff; }

.arrows { position: absolute; left: 0; top: 0; z-index: 10; pointer-events: none; }
.watermark { position: absolute; right: 16px; bottom: 4px; font-size: 18px; line-height: 28px; color: #999; z-index: 6; }
</style>
